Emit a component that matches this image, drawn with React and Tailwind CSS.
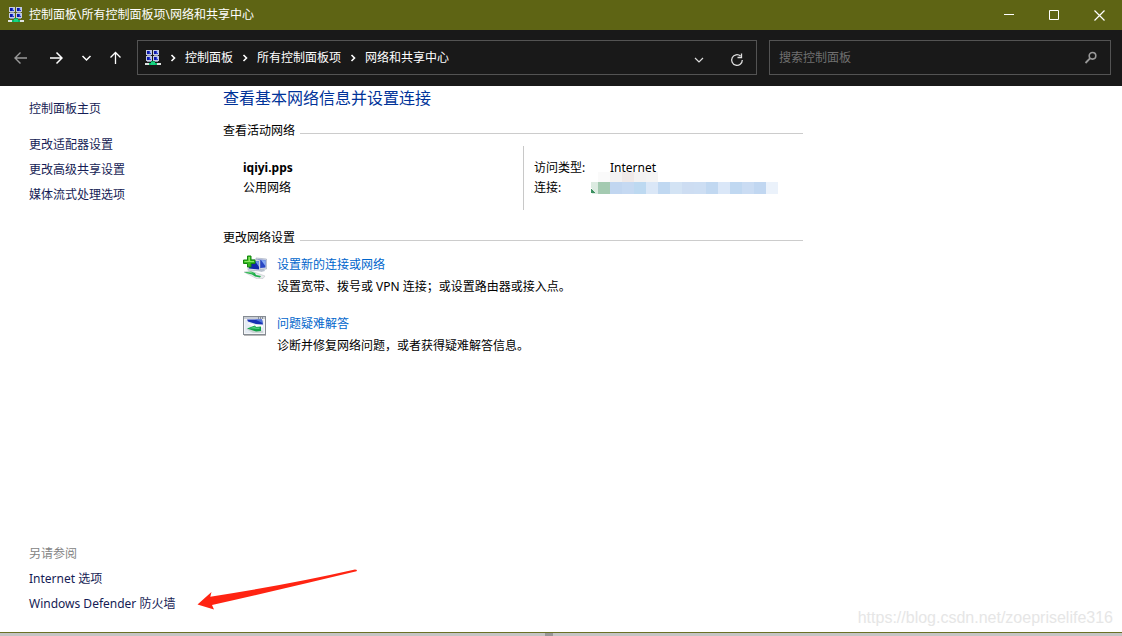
import { useState } from 'react';

const crumbs = ['控制面板', '所有控制面板项', '网络和共享中心'];

const sideLinks = ['更改适配器设置', '更改高级共享设置', '媒体流式处理选项'];

const seeAlso = ['Internet 选项', 'Windows Defender 防火墙'];

const maskedColors = [
  '#c1d6f0', '#c5d9f2', '#bdd9f1', '#dae7f7', '#c0d8f1', '#d3e3f4', '#cdddf2',
  '#cddef3', '#c1d8f1', '#dae7f8', '#c0d8f1', '#cadcf3', '#c1d7f1', '#ebf2fb',
];

const haloColors = ['#fafafa', '#f3f2f2', '#efe9e8', '#f3f2f2', '#f4f4f4'];

function NetworkIcon() {
  return (
    <svg width="16" height="16" viewBox="0 0 16 16" className="shrink-0" shapeRendering="crispEdges" aria-hidden="true">
      {[[1, 0], [8, 0], [1, 6], [8, 6]].map(([x, y]) => (
        <g key={`${x}-${y}`}>
          <rect x={x} y={y} width="6" height="5" fill="#c4cbe2" />
          <rect x={x + 1} y={y + 1} width="4" height="3" fill="#2a3fd0" />
          <rect x={x + 1} y={y + 1} width="2" height="3" fill="#0c18a8" />
          <rect x={x + 4} y={y + 1} width="1" height="2" fill="#a3b8f4" />
          <rect x={x + 1} y={y + 5} width="4" height="1" fill="#8d94a8" />
        </g>
      ))}
      <rect x="6" y="11" width="4" height="2" fill="#0a9a55" />
      <rect x="0" y="13" width="16" height="2" fill="#dfe3e2" />
      <rect x="4" y="13" width="8" height="2" fill="#08bd6c" />
      <rect x="6" y="12" width="4" height="3" fill="#16d583" />
    </svg>
  );
}

function Chevron() {
  return (
    <svg width="24" height="16" viewBox="0 0 24 16" className="shrink-0" fill="none" stroke="#fff" strokeWidth="1.6" aria-hidden="true">
      <path d="M10.500 5l3 3-3 3" />
    </svg>
  );
}

function SetupIcon() {
  return (
    <svg width="24" height="24" viewBox="0 0 24 24" className="shrink-0" aria-hidden="true">
      <path d="M13 3l10.500 1v10L13 15z" fill="#d5dbe6" stroke="#9aa5b8" strokeWidth=".6" />
      <path d="M14.500 4.500l8 .6v7.400l-8 .8z" fill="#2946c4" />
      <path d="M18 5l4.500.2v6z" fill="#85a9f1" />
      <path d="M5 4l12 1v11L5 15z" fill="#dde2ea" stroke="#9aa5b8" strokeWidth=".6" />
      <path d="M6 5.500l10 .8v8.200l-10-1z" fill="#1227a9" />
      <path d="M12 6l4 .3v5.600z" fill="#6f92eb" />
      <path d="M15 15l6-1 1 2-4 1z" fill="#b9c2ce" />
      <path d="M1 17l6-1.500L22 21l-2 2.500-6 .3z" fill="#e8eaec" stroke="#b8bfc3" strokeWidth=".5" />
      <path d="M1 17.500l7-1 4 1.500 1 2 5 1-1 1.500-5-1-3-2z" fill="#20ae4b" />
      <path d="M3 17.400l5-.3 3 1.400z" fill="#76df83" />
      <path d="M4.500 1h3.500v4h4v3.500H8V12H4.500V8.500H.5V5h4z" fill="#35ba1f" stroke="#15860f" />
      <path d="M5.500 2H7v4h4v1H1.500V6h4z" fill="#8be563" />
    </svg>
  );
}

function TroubleshootIcon() {
  return (
    <svg width="24" height="24" viewBox="0 0 24 24" className="shrink-0" aria-hidden="true">
      <rect x=".5" y="2.500" width="22" height="18" fill="#f4f5f7" stroke="#858b92" />
      <path d="M1 3h21v2H1z" fill="#c9ced5" />
      <path d="M15 4h1m1 0h1m1 0h1" stroke="#444b58" />
      <path d="M2 6h19v13H2z" fill="#e4ebf3" />
      <path d="M4 5.500h15l1 5-7-.5-8-2.500z" fill="#1832b4" />
      <path d="M12 5.500h7l.5 3.500z" fill="#4d74da" />
      <path d="M4 9l9 2 7 .5v2L9 12z" fill="#fff" />
      <path d="M3 15l6-2 11 4v2H10z" fill="#cdd4d5" />
      <path d="M4 14.500l8-3 1 1.500 5-.5v4.500l-5 .5z" fill="#12a247" />
      <path d="M6 14.300l6-1.800.5 1.200 4-.2v1.500z" fill="#56d080" />
      <path d="M1 21.500h22" stroke="#b9b9b9" />
    </svg>
  );
}

function MaskedConnection() {
  return (
    <svg width="190" height="26" viewBox="0 0 190 26" shapeRendering="crispEdges" role="img" aria-label="连接">
      {haloColors.map((fill, i) => (
        <rect key={i} x={8 + i * 12} y="2" width="12" height="10" fill={fill} />
      ))}
      <path d="M1 12h7v12H2z" fill="#dcebe1" />
      <path d="M1 19l4 4H1z" fill="#3c9060" />
      <rect x="8" y="12" width="12" height="12" fill="#a4cab1" />
      {maskedColors.map((fill, i) => (
        <rect key={i} x={20 + i * 12} y="12" width="12" height="12" fill={fill} />
      ))}
    </svg>
  );
}

function SectionTitle({ children }) {
  return (
    <div className="flex h-5 items-center gap-[5px]">
      <h2>{children}</h2>
      <div className="mt-1 h-px flex-1 bg-[#cccccc]" />
    </div>
  );
}

function Task({ icon, title, children }) {
  return (
    <div className="flex gap-[10px] pl-5">
      {icon}
      <div className="leading-5">
        <a href="#" className="text-[#0066cc]">{title}</a>
        <p className="mt-0.5">{children}</p>
      </div>
    </div>
  );
}

export default function App() {
  const [query, setQuery] = useState('');

  return (
    <div className="relative flex min-h-screen flex-col bg-white font-['Noto_Sans','Noto_Sans_CJK_SC',sans-serif] text-xs text-black">
      <header className="flex h-[30px] items-center bg-[#5e6414] pl-2 text-white">
        <NetworkIcon />
        <h1 className="ml-[5px] flex-1">控制面板\所有控制面板项\网络和共享中心</h1>
        <button aria-label="最小化" className="flex h-full w-[45px] items-center justify-center">
          <svg width="11" height="11" stroke="#fff" fill="none"><path d="M0 4.500h10" /></svg>
        </button>
        <button aria-label="最大化" className="flex h-full w-[45px] items-center justify-center">
          <svg width="11" height="11" stroke="#fff" fill="none"><path d="M.5.5h9v9h-9z" /></svg>
        </button>
        <button aria-label="关闭" className="flex h-full w-[45px] items-center justify-center">
          <svg width="11" height="11" stroke="#fff" fill="none"><path d="M.5.5l10 10m0-10l-10 10" strokeWidth="1.200" /></svg>
        </button>
      </header>

      <div className="flex h-14 items-center bg-[#191919] pr-[11px] pb-px text-white">
        <nav className="flex w-[137px] shrink-0 items-center pl-[14px]">
          <button aria-label="后退" className="w-[35px]">
            <svg width="14" height="14" viewBox="0 0 14 14" fill="none" stroke="#999" strokeWidth="1.400"><path d="M13 7H1.500M6.500 1.500L1 7l5.500 5.500" /></svg>
          </button>
          <button aria-label="前进" className="w-[32px]">
            <svg width="14" height="14" viewBox="0 0 14 14" fill="none" stroke="#fff" strokeWidth="1.500"><path d="M1 7h11.500M7.500 1.500L13 7l-5.500 5.500" /></svg>
          </button>
          <button aria-label="最近浏览的位置" className="w-[28px]">
            <svg width="12" height="14" viewBox="0 0 12 14" fill="none" stroke="#fff" strokeWidth="1.500"><path d="M1.500 5L5.500 9l4-4" /></svg>
          </button>
          <button aria-label="向上">
            <svg width="14" height="14" viewBox="0 0 14 14" fill="none" stroke="#fff" strokeWidth="1.300"><path d="M6.500 13V1.500M1.500 6.500l5-5 5 5" /></svg>
          </button>
        </nav>
        <div className="grid flex-1 grid-cols-[620fr_342fr] gap-3">
          <div className="flex h-[35px] items-center border border-[#535353] pl-[7px]">
            <NetworkIcon />
            {crumbs.map((name) => (
              <span key={name} className="flex items-center">
                <Chevron />
                <button className="whitespace-nowrap">{name}</button>
              </span>
            ))}
            <button aria-label="以前的位置" className="mt-1 ml-auto w-[38px]">
              <svg width="12" height="12" viewBox="0 0 12 12" className="mx-auto" fill="none" stroke="#ddd" strokeWidth="1.200"><path d="M2 4l4 4 4-4" /></svg>
            </button>
            <button aria-label="刷新" className="mt-1 w-[38px]">
              <svg width="14" height="14" viewBox="0 0 14 14" className="mx-auto" fill="none" stroke="#ddd" strokeWidth="1.300"><path d="M10.500 3A5.300 5.300 0 1 0 12.300 7M11.500.5v4h-4" /></svg>
            </button>
          </div>
          <label className="flex h-[35px] items-center border border-[#535353] pr-3 pl-[9px]">
            <input
              type="text"
              aria-label="搜索控制面板"
              placeholder="搜索控制面板"
              value={query}
              onChange={(e) => setQuery(e.target.value)}
              className="min-w-0 flex-1 bg-transparent outline-none placeholder:text-[#707070]"
            />
            <svg width="14" height="14" viewBox="0 0 14 14" fill="none" stroke="#999" aria-hidden="true">
              <circle cx="8.500" cy="4.800" r="3.300" strokeWidth="1.600" />
              <path d="M6.200 7.200L1.500 12" strokeWidth="1.800" />
            </svg>
          </label>
        </div>
      </div>

      <div className="flex flex-1">
        <aside className="flex w-[223px] shrink-0 flex-col pt-[10px] pb-4 pl-[29px] leading-[25px] text-[#151c55]">
          <a href="#">控制面板主页</a>
          <div className="mt-[11px] flex flex-col">
            {sideLinks.map((text) => (
              <a key={text} href="#">{text}</a>
            ))}
          </div>
          <div className="mt-auto flex flex-col">
            <h2 className="text-[#838383]">另请参阅</h2>
            {seeAlso.map((text) => (
              <a key={text} href="#">{text}</a>
            ))}
          </div>
        </aside>

        <main className="max-w-[580px] flex-1">
          <h2 className="text-base text-[#003399]">查看基本网络信息并设置连接</h2>
          <div className="mt-[11px]">
            <SectionTitle>查看活动网络</SectionTitle>
          </div>
          <div className="mt-[5px] flex h-16 leading-5">
            <div className="w-[300px] pt-3 pl-5">
              <p className="font-bold">iqiyi.pps</p>
              <p>公用网络</p>
            </div>
            <dl className="grid flex-1 grid-cols-[56px_1fr] content-start border-l border-[#c8c8c8] pt-3 pl-[10px]">
              <dt>访问类型:</dt>
              <dd className="pl-5">Internet</dd>
              <dt>连接:</dt>
              <dd className="-mt-2"><MaskedConnection /></dd>
            </dl>
          </div>
          <div className="mt-[18px]">
            <SectionTitle>更改网络设置</SectionTitle>
          </div>
          <div className="mt-[7px] flex flex-col gap-[17px]">
            <Task icon={<SetupIcon />} title="设置新的连接或网络">
              设置宽带、拨号或 VPN 连接；或设置路由器或接入点。
            </Task>
            <Task icon={<TroubleshootIcon />} title="问题疑难解答">
              诊断并修复网络问题，或者获得疑难解答信息。
            </Task>
          </div>
        </main>
      </div>

      <footer className="flex h-1 justify-center border-t border-[#6b7026] bg-[#c4c4c4]">
        <div className="mr-6 w-2 bg-[#979797]" />
      </footer>

      <svg width="162" height="42" viewBox="0 0 162 42" className="pointer-events-none absolute bottom-[26px] left-[197px]" aria-hidden="true">
        <path d="M.5 36.500L14.500 24l-1.200 4.700Q90 17 158 1.600l2 .4-.5 1.200Q90 20 15 37l2 4.500z" fill="#ff2412" />
      </svg>
      <p className="pointer-events-none absolute right-[9px] bottom-[6px] font-['Liberation_Sans',sans-serif] text-base text-[#e6e6e6]">
        https://blog.csdn.net/zoepriselife316
      </p>
    </div>
  );
}
